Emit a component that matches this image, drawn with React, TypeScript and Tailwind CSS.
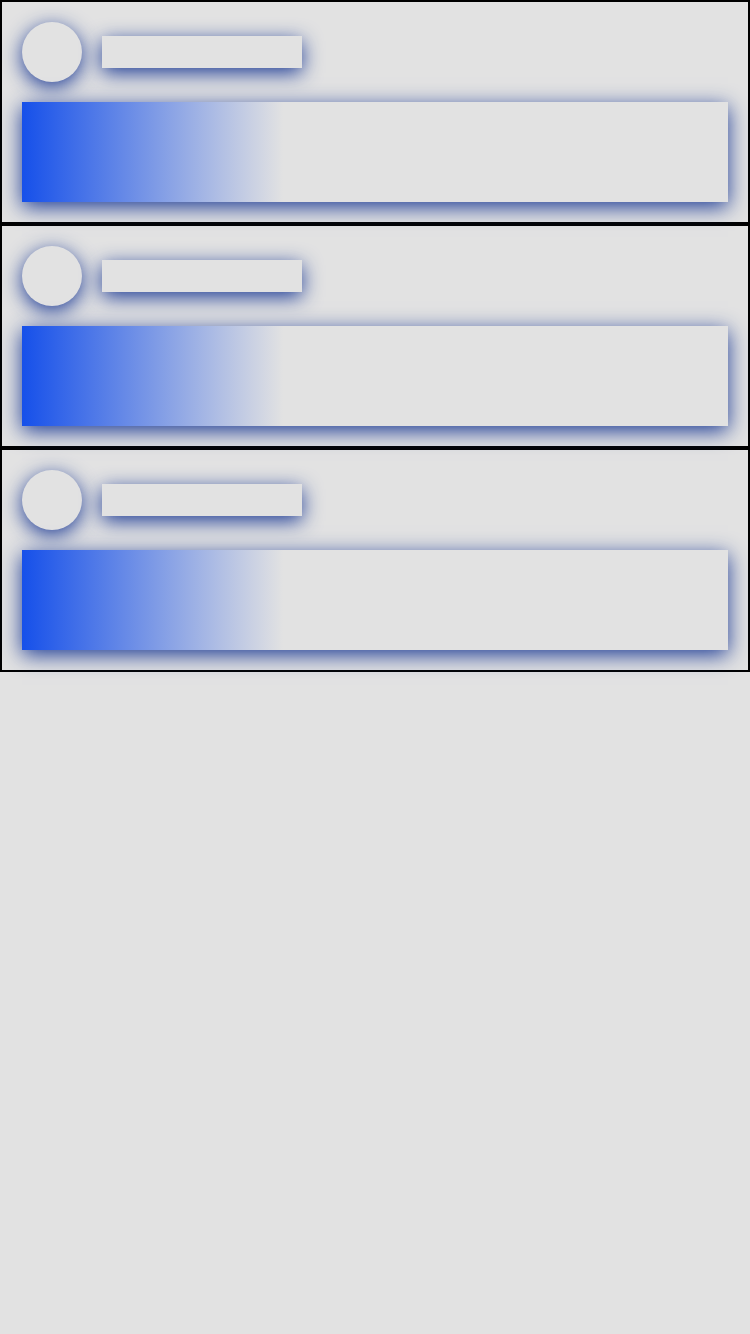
import React from 'react';

const SkeletonCard: React.FC = () => (
  <div className="border-2 border-black p-5 flex flex-col gap-5">
    <div className="flex items-center gap-5">
      <div className="h-[60px] w-[60px] rounded-full bg-[#e2e2e2] shadow-[0_5px_20px_#1e3c96]"></div>
      <div className="h-8 w-[200px] bg-[#e2e2e2] shadow-[0_5px_20px_#1e3c96]"></div>
    </div>
    <div className="h-[100px] w-full bg-[linear-gradient(to_right,#1650ea_0%,#e2e2e2_37%)] shadow-[0_5px_20px_#1e3c96]"></div>
  </div>
);

export default function App() {
  return (
    <div className="min-h-screen bg-[#e2e2e2]">
      <SkeletonCard />
      <SkeletonCard />
      <SkeletonCard />
    </div>
  );
}
